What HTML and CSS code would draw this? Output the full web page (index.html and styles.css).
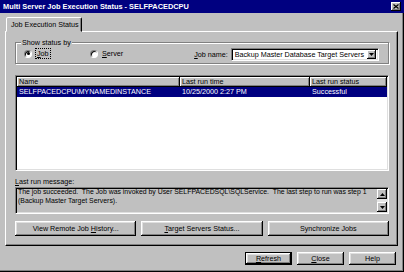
FILE: index.html
```html
<!DOCTYPE html>
<html lang="en">

<head>
  <meta charset="UTF-8">
  <title>Multi Server Job Execution Status - SELFPACEDCPU</title>
  <link rel="stylesheet" href="styles.css">
</head>

<body>
  <div class="window">
    <div class="titlebar">
      <span class="title">Multi Server Job Execution Status - SELFPACEDCPU</span>
      <span class="close-btn">
        <svg width="6" height="5" viewBox="0 0 6 5">
          <path d="M0.5 0.5 L5.5 4.5 M5.5 0.5 L0.5 4.5" stroke="#000" stroke-width="1.2" fill="none" />
        </svg>
      </span>
    </div>

    <div class="content">
      <div class="tabs">
        <div class="tab">Job Execution Status</div>
      </div>

      <div class="panel">
        <fieldset class="group">
          <legend>Show status by</legend>
          <div class="group-row">
            <label class="radio radio-job">
              <span class="radio-dot checked"></span>
              <span class="focus"><u>J</u>ob</span>
            </label>
            <label class="radio">
              <span class="radio-dot"></span>
              <span><u>S</u>erver</span>
            </label>
            <div class="job-name">
              <span><u>J</u>ob name:</span>
              <div class="combo">
                <span class="combo-text">Backup Master Database Target Servers</span>
                <span class="combo-btn">
                  <svg width="5" height="3" viewBox="0 0 5 3"><path d="M0 0 H5 L2.5 3 Z" fill="#000" /></svg>
                </span>
              </div>
            </div>
          </div>
        </fieldset>

        <div class="listview">
          <div class="list-head">
            <span class="head-cell">Name</span>
            <span class="head-cell">Last run time</span>
            <span class="head-cell">Last run status</span>
          </div>
          <div class="list-row selected">
            <span class="cell">SELFPACEDCPU\MYNAMEDINSTANCE</span>
            <span class="cell">10/25/2000 2:27 PM</span>
            <span class="cell">Successful</span>
          </div>
        </div>

        <div class="field-label"><u>L</u>ast run message:</div>
        <div class="message">
          <div class="message-text">The job succeeded.&nbsp; The Job was invoked by User SELFPACEDSQL\SQLService.&nbsp; The last step to run was step 1<br>(Backup Master Target Servers).</div>
          <div class="scrollbar">
            <span class="arrow">
              <svg width="5" height="3" viewBox="0 0 5 3"><path d="M0 3 H5 L2.5 0 Z" fill="#000" /></svg>
            </span>
            <span class="track"></span>
            <span class="arrow">
              <svg width="5" height="3" viewBox="0 0 5 3"><path d="M0 0 H5 L2.5 3 Z" fill="#000" /></svg>
            </span>
          </div>
        </div>

        <div class="actions">
          <button class="btn">View Remote Job <u>H</u>istory...</button>
          <button class="btn"><u>T</u>arget Servers Status...</button>
          <button class="btn">Synchronize Jobs</button>
        </div>
      </div>

      <div class="footer">
        <button class="btn btn-small btn-default"><u>R</u>efresh</button>
        <button class="btn btn-small"><u>C</u>lose</button>
        <button class="btn btn-small">Help</button>
      </div>
    </div>
  </div>
</body>
</html>
```

FILE: styles.css
```css
:root {
  --face: #c0c0c0;
  --shadow: #808080;
  --light: #dfdfdf;
  --navy: #000080;
}

* {
  box-sizing: border-box;
}

body {
  margin: 0;
  font-family: 'Liberation Sans', Arial, sans-serif;
  font-size: 7.2px;
  line-height: 9px;
  color: #000;
  background-color: var(--face);
}

u {
  text-decoration: underline;
  text-underline-offset: 1px;
}

.window {
  width: 404px;
  height: 272px;
  background-color: var(--face);
  box-shadow: inset -1px -1px #000, inset -2px -2px var(--shadow);
}

.titlebar {
  height: 13px;
  padding: 0 3px;
  display: flex;
  align-items: center;
  justify-content: space-between;
  background-color: var(--navy);
  color: #fff;
  font-weight: bold;
  font-size: 7.4px;
}

.close-btn {
  width: 10px;
  height: 9px;
  display: flex;
  align-items: center;
  justify-content: center;
  background-color: var(--face);
  box-shadow: inset -1px -1px #000, inset 1px 1px #fff, inset -2px -2px var(--shadow);
}

.content {
  padding: 4px 0 0 5px;
}

/* tab strip */
.tabs {
  display: flex;
  height: 14px;
  padding-left: 1px;
  position: relative;
  z-index: 1;
}

.tab {
  width: 76px;
  height: 15px;
  padding: 2px 0 0 4px;
  background-color: var(--face);
  border: 1px solid;
  border-color: #fff #000 transparent #fff;
  border-radius: 2px 2px 0 0;
  box-shadow: inset -1px 0 var(--shadow);
}

.panel {
  width: 393px;
  height: 215px;
  padding: 0 8px 0 9px;
  border: 1px solid;
  border-color: #fff #000 #000 #fff;
  box-shadow: inset -1px -1px var(--shadow);
}

/* group box */
.group {
  margin: 6px 0 0;
  padding: 1px 9px 2px 8px;
  border: 1px solid var(--shadow);
  box-shadow: 1px 1px #fff, inset 1px 1px #fff;
  min-width: 0;
}

.group legend {
  margin-left: -3px;
  padding: 0 1px;
  background-color: var(--face);
}

.group-row {
  height: 13px;
  display: flex;
  align-items: center;
}

.radio {
  display: flex;
  align-items: center;
  gap: 4px;
  margin-top: -2px;
}

.radio-job {
  width: 66px;
}

.radio-dot {
  width: 8px;
  height: 8px;
  border-radius: 50%;
  background-color: #fff;
  border: 1px solid;
  border-color: var(--shadow) #fff #fff var(--shadow);
  box-shadow: inset 1px 1px #000;
  display: flex;
  align-items: center;
  justify-content: center;
}

.radio-dot.checked::after {
  content: '';
  width: 3px;
  height: 3px;
  border-radius: 50%;
  background-color: #000;
}

.focus {
  outline: 1px dotted #000;
  outline-offset: 0;
  padding: 0 1px;
}

.job-name {
  margin-left: auto;
  display: flex;
  align-items: center;
  gap: 3px;
}

.combo {
  height: 13px;
  display: flex;
  align-items: center;
  padding: 2px;
  background-color: #fff;
  border: 1px solid;
  border-color: var(--shadow) #fff #fff var(--shadow);
  box-shadow: inset 1px 1px #000, inset -1px -1px var(--light);
}

.combo-text {
  padding: 0 3px 0 1px;
  white-space: nowrap;
}

.combo-btn {
  width: 9px;
  height: 9px;
  display: flex;
  align-items: center;
  justify-content: center;
  background-color: var(--face);
  box-shadow: inset -1px -1px #000, inset 1px 1px #fff, inset -2px -2px var(--shadow);
}

/* list view */
.listview {
  margin-top: 11px;
  height: 96px;
  padding: 1px;
  background-color: #fff;
  border: 1px solid;
  border-color: var(--shadow) #fff #fff var(--shadow);
  box-shadow: inset 1px 1px #000, inset -1px -1px var(--light);
}

.list-head,
.list-row {
  display: grid;
  grid-template-columns: 163px 130px 1fr;
  height: 10px;
  line-height: 10px;
}

.head-cell {
  padding-left: 2px;
  background-color: var(--face);
  box-shadow: inset -1px -1px #000, inset 1px 1px #fff, inset -2px -2px var(--shadow);
}

.cell {
  padding-left: 2px;
  white-space: nowrap;
}

.list-row.selected {
  background-color: var(--navy);
  color: #fff;
}

.field-label {
  margin-top: 6px;
}

/* read-only message box */
.message {
  margin-top: 1px;
  height: 27px;
  display: flex;
  border: 1px solid;
  border-color: var(--shadow) #fff #fff var(--shadow);
  box-shadow: inset 1px 1px #000, inset -1px -1px var(--light);
  padding: 1px;
}

.message-text {
  flex: 1;
  padding-left: 1px;
  margin-top: -1px;
  font-size: 6.9px;
  line-height: 8.5px;
  white-space: nowrap;
  overflow: hidden;
}

.scrollbar {
  width: 10px;
  display: flex;
  flex-direction: column;
}

.arrow {
  height: 10px;
  display: flex;
  align-items: center;
  justify-content: center;
  background-color: var(--face);
  box-shadow: inset -1px -1px #000, inset 1px 1px #fff, inset -2px -2px var(--shadow);
}

.track {
  flex: 1;
  background-color: #e4e4e4;
}

/* buttons */
.actions {
  margin-top: 7px;
  display: grid;
  grid-template-columns: repeat(3, 1fr);
  gap: 5px;
}

.btn {
  height: 15px;
  padding: 0;
  border: none;
  font: inherit;
  color: #000;
  background-color: var(--face);
  box-shadow: inset -1px -1px #000, inset 1px 1px #fff, inset -2px -2px var(--shadow), inset 2px 2px var(--light);
}

.footer {
  display: flex;
  justify-content: flex-end;
  gap: 5px;
  padding: 6px 8px 0 0;
}

.btn-small {
  width: 47px;
  height: 13px;
}

.btn-default {
  border: 1px solid #000;
}
```
